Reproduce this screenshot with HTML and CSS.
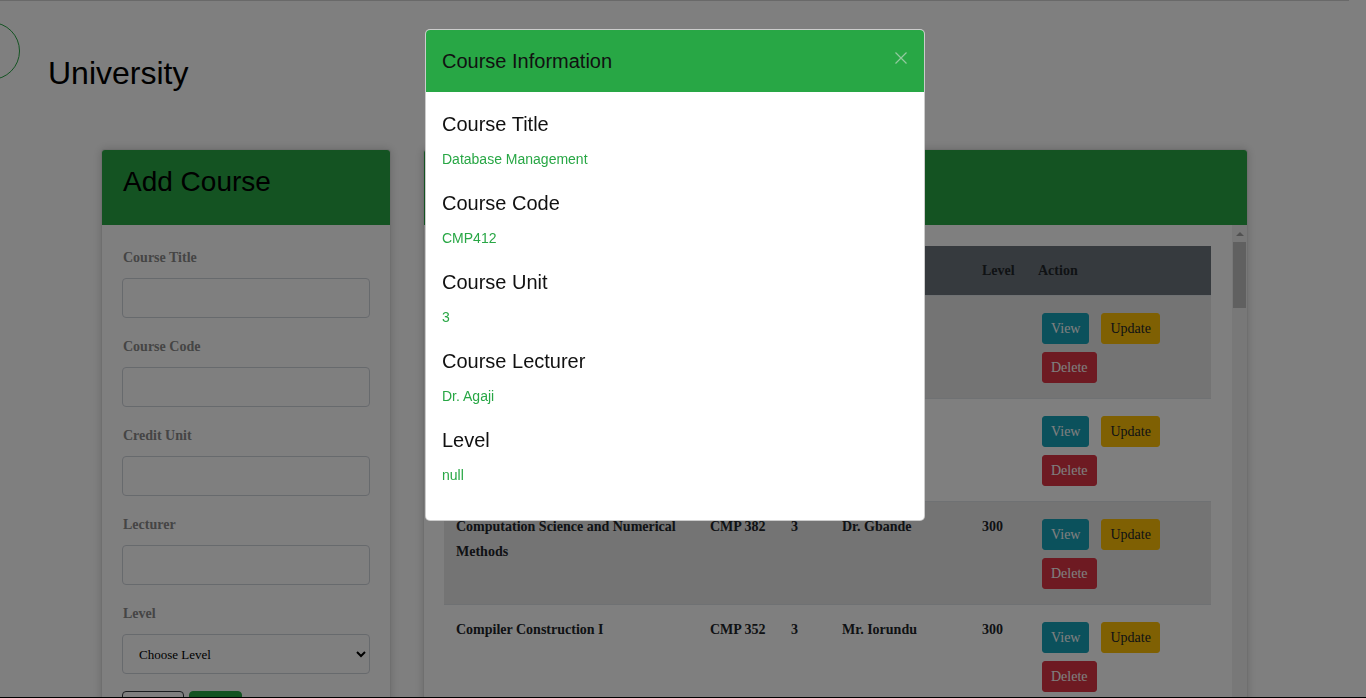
FILE: index.html
```html
<!DOCTYPE html>
<html lang="en">
<head>
<meta charset="utf-8">
<title>University - Courses</title>
<link rel="stylesheet" href="styles.css">
</head>
<body>
<header class="topbar">
  <div class="logo"></div>
  <h1 class="brand">University</h1>
</header>

<main class="layout">
  <section class="card">
    <div class="card-head"><h2>Add Course</h2></div>
    <form class="form-body">
      <label class="lbl">Course Title</label>
      <input class="field" type="text">
      <label class="lbl">Course Code</label>
      <input class="field" type="text">
      <label class="lbl">Credit Unit</label>
      <input class="field" type="text">
      <label class="lbl">Lecturer</label>
      <input class="field" type="text">
      <label class="lbl">Level</label>
      <select class="field select">
        <option>Choose Level</option>
        <option>100</option>
        <option>200</option>
        <option>300</option>
        <option>400</option>
      </select>
      <div class="form-actions">
        <button type="button" class="btn btn-outline">Reset</button>
        <button type="button" class="btn btn-add">Add</button>
      </div>
    </form>
  </section>

  <section class="card">
    <div class="card-head"><h2>Course List</h2></div>
    <div class="list-body">
      <div class="table-area">
        <table class="courses">
          <colgroup>
            <col class="c-title"><col class="c-code"><col class="c-unit"><col class="c-lect"><col class="c-level"><col class="c-act">
          </colgroup>
          <thead>
            <tr><th>Course Title</th><th>Code</th><th>Unit</th><th>Lecturer</th><th>Level</th><th>Action</th></tr>
          </thead>
          <tbody>
            <tr><td>Database Management</td><td>CMP 412</td><td>3</td><td>Dr. Agaji</td><td></td><td><div class="acts"><button class="sm view">View</button><button class="sm upd">Update</button><button class="sm del">Delete</button></div></td></tr>
            <tr><td>Software Engineering</td><td>CMP 416</td><td>3</td><td>Dr. Ogala</td><td></td><td><div class="acts"><button class="sm view">View</button><button class="sm upd">Update</button><button class="sm del">Delete</button></div></td></tr>
            <tr><td>Computation Science and Numerical Methods</td><td>CMP 382</td><td>3</td><td>Dr. Gbande</td><td>300</td><td><div class="acts"><button class="sm view">View</button><button class="sm upd">Update</button><button class="sm del">Delete</button></div></td></tr>
            <tr><td>Compiler Construction I</td><td>CMP 352</td><td>3</td><td>Mr. Iorundu</td><td>300</td><td><div class="acts"><button class="sm view">View</button><button class="sm upd">Update</button><button class="sm del">Delete</button></div></td></tr>
          </tbody>
        </table>
      </div>
      <div class="scrollbar" aria-hidden="true">
        <div class="sb-arrow"><span class="sb-tri"></span></div>
        <div class="sb-thumb"></div>
      </div>
    </div>
  </section>
</main>

<div class="backdrop"></div>
<div class="modal">
  <div class="modal-dialog">
    <div class="modal-content">
      <div class="modal-head">
        <h5 class="modal-title">Course Information</h5>
        <button class="close" type="button" aria-label="Close">
          <svg width="12" height="12" viewBox="0 0 12 12"><path d="M0.5 0.5 L11.5 11.5 M11.5 0.5 L0.5 11.5" stroke="currentColor" stroke-width="1.2" fill="none"/></svg>
        </button>
      </div>
      <div class="modal-body">
        <h5 class="info-label">Course Title</h5>
        <p class="info-value">Database Management</p>
        <h5 class="info-label">Course Code</h5>
        <p class="info-value">CMP412</p>
        <h5 class="info-label">Course Unit</h5>
        <p class="info-value">3</p>
        <h5 class="info-label">Course Lecturer</h5>
        <p class="info-value">Dr. Agaji</p>
        <h5 class="info-label">Level</h5>
        <p class="info-value">null</p>
      </div>
    </div>
  </div>
</div>
<div class="window-edge"></div>
</body>
</html>
```

FILE: styles.css
```css
* { box-sizing: border-box; }

html, body { height: 100%; }

body {
  margin: 0;
  padding-right: 17px;
  font-family: "Liberation Serif", "Times New Roman", serif;
  color: #212529;
  background: #fff;
  overflow: hidden;
}

/* ---------- top bar ---------- */
.topbar {
  display: flex;
  align-items: flex-start;
  height: 120px;
  border-top: 1px solid #d2d2d2;
}
.logo {
  flex: none;
  width: 58px;
  height: 58px;
  border: 1px solid #28a745;
  border-radius: 50%;
  margin: 21px 0 0 -38px;
}
.brand {
  margin: 53px 0 0 28px;
  font: 400 32px/38px "Liberation Sans", Arial, sans-serif;
  color: #000;
}

/* ---------- layout ---------- */
.layout {
  width: 1147px;
  margin: 29px auto 0;
  display: grid;
  grid-template-columns: 290px 825px;
  gap: 32px;
  align-items: start;
}

.card {
  background: #fff;
  border: 1px solid rgba(0,0,0,.125);
  border-radius: 4px;
  box-shadow: 0 0 10px rgba(0,0,0,.18);
  overflow: hidden;
}
.card-head {
  background: #28a745;
  padding: 15px 21px 26px;
}
.card-head h2 {
  margin: 0;
  font: 400 28px/34px "Liberation Sans", Arial, sans-serif;
  color: #000;
}

/* ---------- form ---------- */
.form-body {
  padding: 22px 20px 20px;
}
.lbl {
  display: block;
  font-weight: 700;
  font-size: 14px;
  line-height: 21px;
  color: #8a8a8a;
  margin-bottom: 10px;
  padding-left: 1px;
}
.field {
  display: block;
  width: 100%;
  height: 40px;
  margin: 0 0 18px;
  border: 1px solid #ced4da;
  border-radius: 4px;
  background: #fff;
  padding: 0 12px;
}
.select {
  font: 13px "Liberation Serif", "Times New Roman", serif;
  color: #000;
  margin-bottom: 17px;
}
.form-actions {
  display: flex;
  gap: 5px;
}
.btn {
  font: 16px/24px "Liberation Serif", "Times New Roman", serif;
  padding: 6px 12px;
  border: 1px solid transparent;
  border-radius: 4px;
}
.btn-outline {
  background: transparent;
  border-color: #343a40;
  color: #343a40;
}
.btn-add {
  background: #28a745;
  border-color: #28a745;
  color: #fff;
}

/* ---------- course list ---------- */
.list-body {
  display: flex;
  height: 480px;
  overflow: hidden;
}
.table-area {
  flex: 1;
  min-width: 0;
  padding: 21px 21px 20px 20px;
}
.scrollbar {
  flex: none;
  width: 15px;
  background: #f1f1f1;
  display: flex;
  flex-direction: column;
}
.sb-arrow {
  height: 17px;
  display: flex;
  justify-content: center;
  padding-top: 7px;
}
.sb-tri {
  width: 0;
  height: 0;
  border-left: 4px solid transparent;
  border-right: 4px solid transparent;
  border-bottom: 4px solid #a3a3a3;
}
.sb-thumb {
  height: 66px;
  margin: 0 1px;
  background: #c1c1c1;
}

.courses {
  width: 100%;
  border-collapse: collapse;
  table-layout: fixed;
  font-size: 14px;
  font-weight: 700;
  line-height: 25px;
}
.c-title { width: 254px; }
.c-code { width: 81px; }
.c-unit { width: 51px; }
.c-lect { width: 140px; }
.c-level { width: 57px; }
.c-act { width: 184px; }

.courses th {
  background: #6c757d;
  color: #212529;
  text-align: left;
  padding: 12px;
}
.courses th:last-child { padding-left: 11px; }
.courses td {
  padding: 12px;
  vertical-align: top;
  border-top: 1px solid #dee2e6;
  color: #212529;
}
.courses tbody tr:nth-child(odd) { background: #e8e8e8; }

.acts {
  display: flex;
  flex-wrap: wrap;
  column-gap: 12px;
  row-gap: 8px;
  padding: 5px 0 3px 3px;
}
.sm {
  font: 400 14px/21px "Liberation Serif", "Times New Roman", serif;
  padding: 4px 8px;
  border: 1px solid transparent;
  border-radius: 3px;
}
.view { background: #17a2b8; border-color: #17a2b8; color: #fff; }
.upd { background: #ffc107; border-color: #ffc107; color: #212529; }
.del { background: #dc3545; border-color: #dc3545; color: #fff; }

/* ---------- modal ---------- */
.backdrop {
  position: fixed;
  inset: 0;
  background: rgba(0,0,0,.5);
}
.modal {
  position: fixed;
  inset: 0;
  padding-right: 16px;
}
.modal-dialog {
  width: 500px;
  margin: 29px auto 0;
}
.modal-content {
  background: #fff;
  border: 1px solid rgba(0,0,0,.2);
  border-radius: 5px;
  overflow: hidden;
  font-family: "Liberation Sans", Arial, sans-serif;
}
.modal-head {
  display: flex;
  align-items: center;
  justify-content: space-between;
  background: #28a745;
  padding: 16px;
}
.modal-title {
  margin: 0;
  font-size: 20px;
  line-height: 30px;
  font-weight: 400;
  color: #111;
}
.close {
  display: flex;
  padding: 0;
  border: 0;
  background: none;
  color: #93c9a0;
  margin: 0 1px 6px 0;
}
.modal-body {
  padding: 17px 16px 16px;
}
.info-label {
  margin: 0 0 10px;
  font-size: 20px;
  line-height: 30px;
  font-weight: 400;
  color: #111;
}
.info-value {
  margin: 0 0 18px;
  font-size: 14px;
  line-height: 21px;
  color: #28a745;
}

.window-edge {
  position: fixed;
  left: 0;
  right: 0;
  bottom: 0;
  height: 1px;
  background: #000;
}
```
